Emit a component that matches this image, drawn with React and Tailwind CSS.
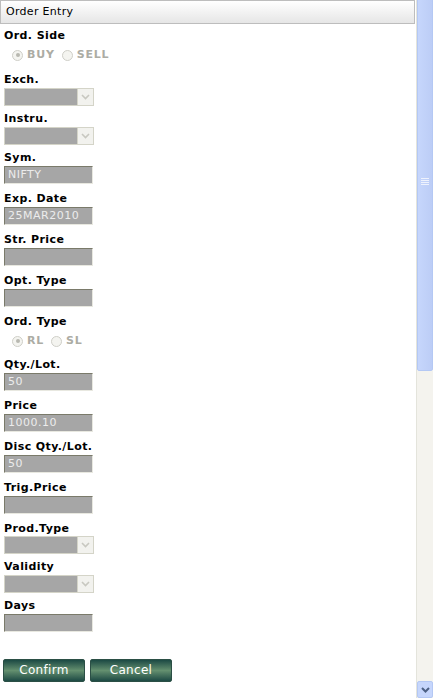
const font = { fontFamily: '"DejaVu Sans", Verdana, sans-serif' }

function Label({ children, tight }) {
  return (
    <div className={`${tight ? 'h-[15px]' : 'h-[16px]'} text-[11px] leading-[16px] font-bold tracking-[0.4px] text-black`}>
      {children}
    </div>
  )
}

function TextBox({ value }) {
  return (
    <div className="mb-[7px] h-[18px] w-[89px] border border-t-[#7a7a6a] border-l-[#7a7a6a] border-b-[#e8e8e0] border-r-[#e8e8e0] bg-[#a6a6a6] pl-[3px] text-[11px] leading-[16px] tracking-[0.5px] text-[#ececec]">
      {value}
    </div>
  )
}

function SelectBox() {
  return (
    <div className="mb-[5px] flex h-[18px] w-[90px] border border-[#d4d4c8] bg-[#a6a6a6]">
      <div className="flex-1" />
      <div className="flex w-[16px] items-center justify-center border-l border-[#d4d4c8] bg-[#f2f2ee]">
        <svg width="9" height="6" viewBox="0 0 9 6">
          <path d="M1 1 L4.5 4.5 L8 1" fill="none" stroke="#c8c8c0" strokeWidth="1.6" />
        </svg>
      </div>
    </div>
  )
}

function Radio({ checked, label }) {
  return (
    <div className="flex items-center gap-[4px]">
      <span className="flex h-[11px] w-[11px] items-center justify-center rounded-full border border-[#cfcfc8] bg-[#f4f4f0]">
        {checked && <span className="h-[4px] w-[4px] rounded-full bg-[#b8b8b0]" />}
      </span>
      <span className="text-[11px] font-bold tracking-[0.8px] text-[#acaca4]">{label}</span>
    </div>
  )
}

function RadioRow({ items, tight }) {
  return (
    <div className={`${tight ? 'mb-[8px]' : 'mb-[9px]'} mt-[3px] flex h-[16px] items-center gap-[7px] pl-[8px]`}>
      {items.map((it) => (
        <Radio key={it.label} {...it} />
      ))}
    </div>
  )
}

function Button({ children }) {
  return (
    <button className="h-[23px] w-[82px] rounded-[2px] border border-[#2b4f45] bg-gradient-to-b from-[#1c4a44] via-[#64906f] to-[#1d4a44] text-[12px] leading-[21px] tracking-[0.3px] text-white">
      {children}
    </button>
  )
}

export default function App() {
  return (
    <div className="flex h-[698px] w-[433px] overflow-hidden bg-white" style={font}>
      <div className="flex-1 pr-[1px]">
        <div className="h-[24px] border border-[#bdbdbd] bg-gradient-to-b from-white to-[#e6e6e6] pl-[5px] text-[11px] leading-[22px] tracking-[0.3px] text-black">
          Order Entry
        </div>
        <div className="pl-[4px] pt-[4px]">
          <Label>Ord. Side</Label>
          <RadioRow items={[{ checked: true, label: 'BUY' }, { checked: false, label: 'SELL' }]} />
          <Label>Exch.</Label>
          <SelectBox />
          <Label>Instru.</Label>
          <SelectBox />
          <Label>Sym.</Label>
          <TextBox value="NIFTY" />
          <Label>Exp. Date</Label>
          <TextBox value="25MAR2010" />
          <Label>Str. Price</Label>
          <TextBox value="" />
          <Label>Opt. Type</Label>
          <TextBox value="" />
          <Label>Ord. Type</Label>
          <RadioRow tight items={[{ checked: true, label: 'RL' }, { checked: false, label: 'SL' }]} />
          <Label>Qty./Lot.</Label>
          <TextBox value="50" />
          <Label>Price</Label>
          <TextBox value="1000.10" />
          <Label>Disc Qty./Lot.</Label>
          <TextBox value="50" />
          <Label>Trig.Price</Label>
          <TextBox value="" />
          <Label tight>Prod.Type</Label>
          <SelectBox />
          <Label>Validity</Label>
          <SelectBox />
          <Label>Days</Label>
          <TextBox value="" />
        </div>
        <div className="mt-[27px] flex gap-[5px] pl-[3px]">
          <Button>Confirm</Button>
          <Button>Cancel</Button>
        </div>
      </div>
      <div className="flex h-[698px] w-[17px] flex-col border-l border-[#e4e4dc] bg-[#f4f3ee]">
        <div className="-mt-[8px] flex h-[379px] items-center justify-center rounded-[2px] border border-[#b4c8f4] bg-gradient-to-r from-[#c6d6fc] to-[#bccdf6]">
          <svg width="8" height="8" viewBox="0 0 8 8">
            <path d="M0 0.5 H8 M0 2.5 H8 M0 4.5 H8 M0 6.5 H8" stroke="#eef2fd" strokeWidth="1" />
          </svg>
        </div>
        <div className="flex-1" />
        <div className="flex h-[17px] items-center justify-center rounded-[2px] border border-[#b4c8f4] bg-[#c6d6fc]">
          <svg width="9" height="6" viewBox="0 0 9 6">
            <path d="M1 1 L4.5 4.5 L8 1" fill="none" stroke="#4d6185" strokeWidth="2" />
          </svg>
        </div>
      </div>
    </div>
  )
}
